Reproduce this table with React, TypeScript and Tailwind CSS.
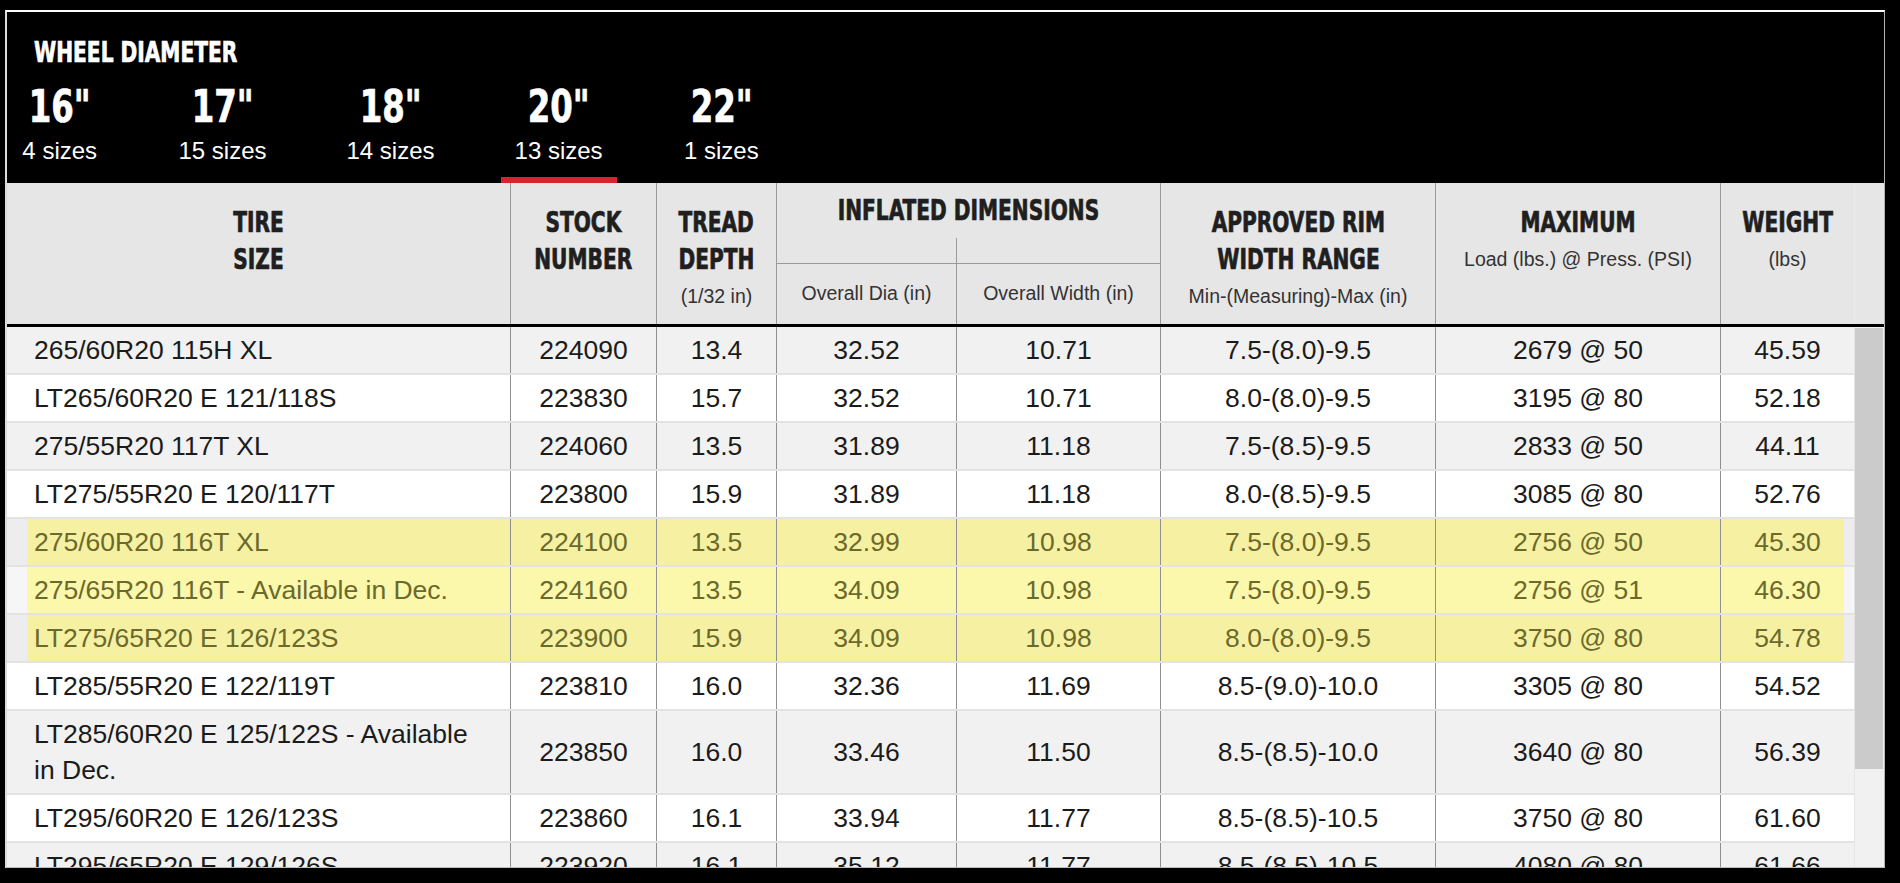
const heavy =
  "font-['Liberation_Sans_Narrow','DejaVu_Sans_Condensed',sans-serif] font-bold [-webkit-text-stroke:0.7px_currentColor]";
const sans = "font-['Liberation_Sans',Arial,sans-serif]";
const cols = "grid grid-cols-[503px_146px_120px_180px_204px_275px_285px_134px]";

const tabs = [
  { d: 16, n: 4 },
  { d: 17, n: 15 },
  { d: 18, n: 14 },
  { d: 20, n: 13, active: true },
  { d: 22, n: 1 },
];

const rows = [
  ["265/60R20 115H XL", "224090", "13.4", "32.52", "10.71", "7.5-(8.0)-9.5", "2679 @ 50", "45.59"],
  ["LT265/60R20 E 121/118S", "223830", "15.7", "32.52", "10.71", "8.0-(8.0)-9.5", "3195 @ 80", "52.18"],
  ["275/55R20 117T XL", "224060", "13.5", "31.89", "11.18", "7.5-(8.5)-9.5", "2833 @ 50", "44.11"],
  ["LT275/55R20 E 120/117T", "223800", "15.9", "31.89", "11.18", "8.0-(8.5)-9.5", "3085 @ 80", "52.76"],
  ["275/60R20 116T XL", "224100", "13.5", "32.99", "10.98", "7.5-(8.0)-9.5", "2756 @ 50", "45.30", "hl"],
  ["275/65R20 116T - Available in Dec.", "224160", "13.5", "34.09", "10.98", "7.5-(8.0)-9.5", "2756 @ 51", "46.30", "hl"],
  ["LT275/65R20 E 126/123S", "223900", "15.9", "34.09", "10.98", "8.0-(8.0)-9.5", "3750 @ 80", "54.78", "hl"],
  ["LT285/55R20 E 122/119T", "223810", "16.0", "32.36", "11.69", "8.5-(9.0)-10.0", "3305 @ 80", "54.52"],
  ["LT285/60R20 E 125/122S - Available in Dec.", "223850", "16.0", "33.46", "11.50", "8.5-(8.5)-10.0", "3640 @ 80", "56.39"],
  ["LT295/60R20 E 126/123S", "223860", "16.1", "33.94", "11.77", "8.5-(8.5)-10.5", "3750 @ 80", "61.60"],
  ["LT295/65R20 E 129/126S", "223920", "16.1", "35.12", "11.77", "8.5-(8.5)-10.5", "4080 @ 80", "61.66"],
];

// condensed heading text (the reference uses a narrow heavy face)
function Heavy({ children }: { children: string }) {
  return (
    <div className={`${heavy} text-[28px] leading-[37px] text-[#1f1f1f]`}>
      <span className="inline-block scale-x-[0.8]">{children}</span>
    </div>
  );
}

function HeadCell({ lines, sub, border = true }: { lines: string[]; sub?: string; border?: boolean }) {
  return (
    <div className={`row-span-2 pt-[21px] text-center ${border ? "border-l border-[#9a9a9a]" : ""}`}>
      {lines.map((l) => (
        <Heavy key={l}>{l}</Heavy>
      ))}
      {sub && <div className={`${sans} text-[19.5px] leading-[37px] text-[#333]`}>{sub}</div>}
    </div>
  );
}

function Row({ r, i }: { r: string[]; i: number }) {
  const hl = r[8] === "hl";
  const odd = i % 2 === 0;
  const bg = hl ? (odd ? "bg-[#f6f1a2]" : "bg-[#fbf7ab]") : odd ? "bg-[#f1f1f1]" : "bg-white";
  const text = hl ? "text-[#6b692b]" : "text-[#1b1b1b]";
  const first = hl
    ? odd
      ? "bg-[linear-gradient(90deg,#ededed_20px,transparent_20px)]"
      : "bg-[linear-gradient(90deg,#f6f6f6_20px,transparent_20px)]"
    : "";
  const last = hl
    ? odd
      ? "bg-[linear-gradient(270deg,#ededed_10px,transparent_10px)]"
      : "bg-[linear-gradient(270deg,#f6f6f6_10px,transparent_10px)]"
    : "";
  return (
    <div className={`${cols} ${bg} ${text} ${sans} border-b-2 border-[#e3e3e3] text-[26.5px] leading-[36px]`}>
      <div className={`py-[5px] pl-[27px] pr-[20px] ${first}`}>{r[0]}</div>
      {r.slice(1, 8).map((c, j) => (
        <div
          key={j}
          className={`flex items-center justify-center border-l border-[#909090] py-[5px] ${j === 6 ? last : ""}`}
        >
          {c}
        </div>
      ))}
    </div>
  );
}

export default function App() {
  return (
    <div className="min-h-screen bg-black pt-[10px] pl-[5px]">
      <div className="w-[1880px] border-t-2 border-l-2 border-r border-b border-t-white border-l-[#dcdcdc] border-r-[#b5b5b5] border-b-[#bdbdbd]">
        <div className="h-[171px] bg-black pt-[25px]">
          <div className={`${heavy} pl-[27px] text-[28px] leading-[32px] text-white`}>
            <span className="inline-block origin-left scale-x-[0.8]">WHEEL DIAMETER</span>
          </div>
          <div className="mt-[16px] flex gap-[52px]">
            {tabs.map((t) => (
              <div
                key={t.d}
                className={`flex flex-col items-center border-b-[6px] px-[14px] pb-[12px] ${
                  t.active ? "border-[#d7232d]" : "border-transparent"
                }`}
              >
                <div className={`${heavy} text-[45px] leading-[44px] text-white`}>
                  <span className="inline-block scale-x-[0.8]">{`${t.d}"`}</span>
                </div>
                <div className={`${sans} mt-[8px] text-[24px] leading-[28px] text-white`}>{t.n} sizes</div>
              </div>
            ))}
          </div>
        </div>

        <div className="flex border-b-[3px] border-black bg-[#e6e6e6]">
          <div className={`${cols} w-[1847px] grid-rows-[81px_60px]`}>
            <HeadCell lines={["TIRE", "SIZE"]} border={false} />
            <HeadCell lines={["STOCK", "NUMBER"]} />
            <HeadCell lines={["TREAD", "DEPTH"]} sub="(1/32 in)" />
            <div className="col-span-2 flex flex-col border-b border-l border-[#9a9a9a] pt-[9px] text-center">
              <Heavy>INFLATED DIMENSIONS</Heavy>
              <div className="mt-auto flex h-[25px]">
                <div className="w-[180px] border-r border-[#9a9a9a]" />
              </div>
            </div>
            <HeadCell lines={["APPROVED RIM", "WIDTH RANGE"]} sub="Min-(Measuring)-Max (in)" />
            <div className="row-span-2 border-l border-[#9a9a9a] pt-[21px] text-center">
              <Heavy>MAXIMUM</Heavy>
              <div className={`${sans} text-[19.5px] leading-[37px] text-[#333]`}>Load (lbs.) @ Press. (PSI)</div>
            </div>
            <div className="row-span-2 border-l border-[#9a9a9a] pt-[21px] text-center">
              <Heavy>WEIGHT</Heavy>
              <div className={`${sans} text-[19.5px] leading-[37px] text-[#333]`}>(lbs)</div>
            </div>
            <div className={`${sans} col-start-4 row-start-2 flex items-center justify-center border-l border-[#9a9a9a] text-[19.5px] text-[#333]`}>
              Overall Dia (in)
            </div>
            <div className={`${sans} col-start-5 row-start-2 flex items-center justify-center border-l border-[#9a9a9a] text-[19.5px] text-[#333]`}>
              Overall Width (in)
            </div>
          </div>
          <div className="w-[30px] border-l border-[#ececec]" />
        </div>

        <div className="flex h-[540px] overflow-hidden">
          <div className="w-[1847px]">
            {rows.map((r, i) => (
              <Row key={r[1]} r={r} i={i} />
            ))}
          </div>
          <div className="w-[30px] border-l border-[#e4e4e4] bg-[#f1f1f1] pt-[1px]">
            <div className="mr-[1px] h-[441px] bg-[#cbcbcb]" />
          </div>
        </div>
      </div>
    </div>
  );
}
